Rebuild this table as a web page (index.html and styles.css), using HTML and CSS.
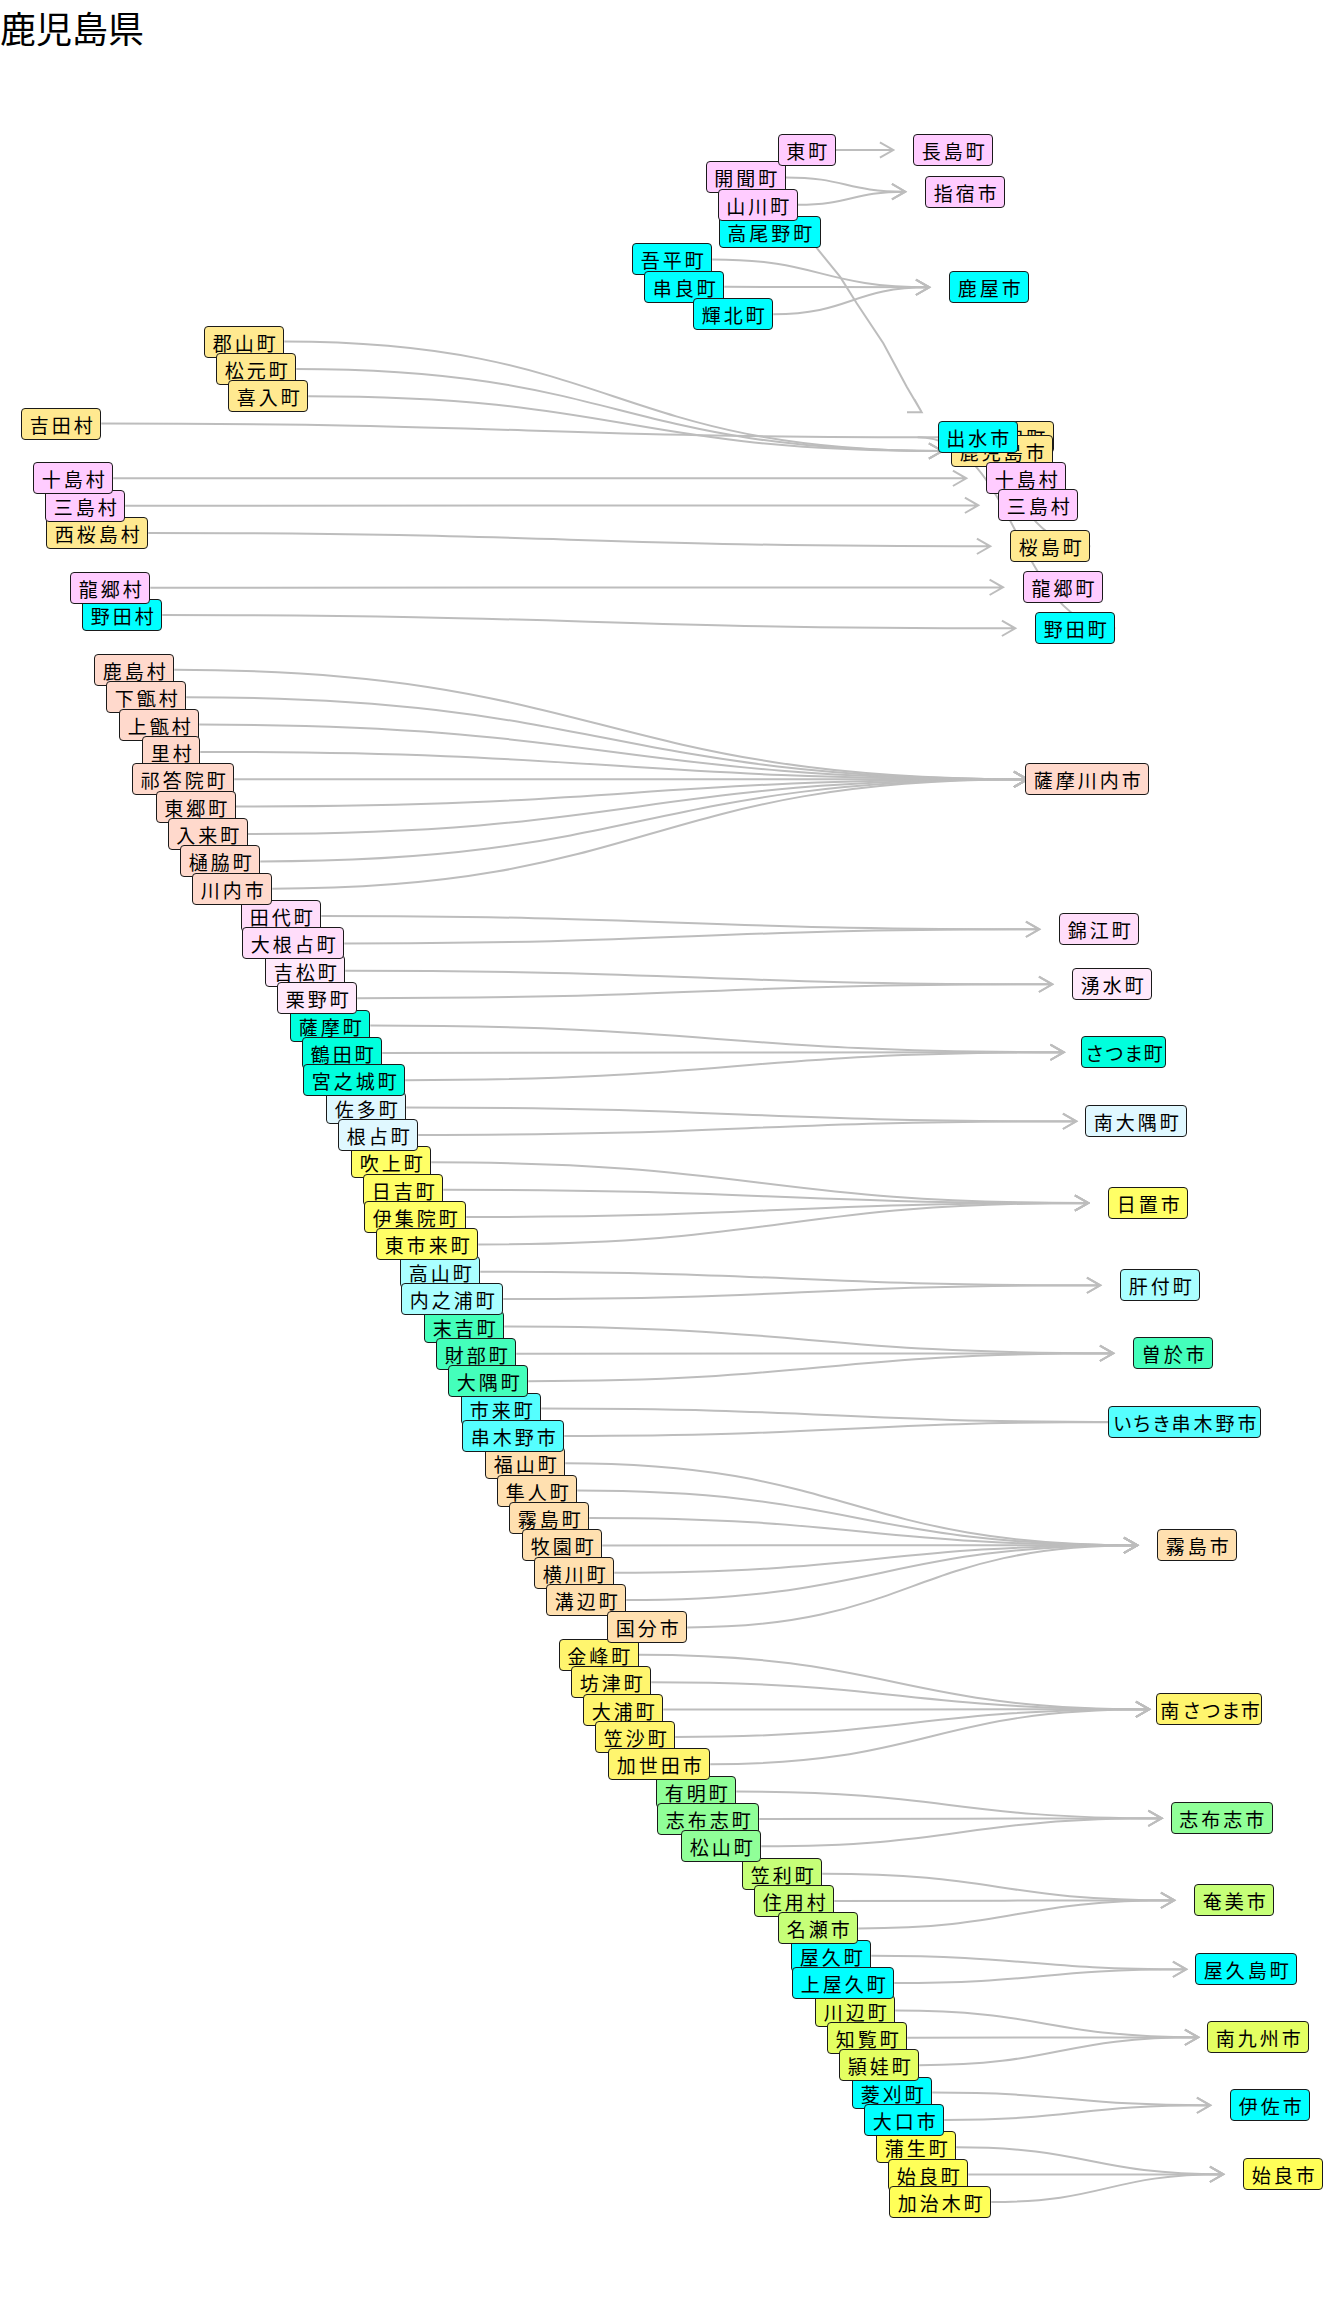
FILE: index.html
```html
<!DOCTYPE html>
<html lang="ja">
<head>
<meta charset="utf-8">
<title>鹿児島県</title>
<link rel="stylesheet" href="styles.css">
</head>
<body>
<h1 class="title">鹿児島県</h1>
<div class="diagram">
  <svg class="edges" width="1344" height="2254" viewBox="0 0 1344 2254" xmlns="http://www.w3.org/2000/svg">
    <path d="M806 182 L816.7 198 L840 226.7 L856.7 253.3 L883.3 293.3 L906.7 336.7 L921.7 362.3 M907 362.3 L921.7 362.3 L914.5 349.5"/>
  </svg>

  <!-- 始良市 -->
  <div class="n c-y2 w3" data-to="t-aira" style="left:876.3px;top:2081.3px">蒲生町</div>
  <div class="n c-y2 w3" data-to="t-aira" style="left:888.3px;top:2108.6px">始良町</div>
  <div class="n c-y2 w4" data-to="t-aira" style="left:889.3px;top:2136px">加治木町</div>
  <!-- 伊佐市 -->
  <div class="n c-cyan w3" data-to="t-isa" style="left:852.3px;top:2026.6px">菱刈町</div>
  <div class="n c-cyan w3" data-to="t-isa" style="left:864.3px;top:2053.9px">大口市</div>
  <!-- 南九州市 -->
  <div class="n c-lime2 w3" data-to="t-minamikyushu" style="left:815.3px;top:1944.5px">川辺町</div>
  <div class="n c-lime2 w3" data-to="t-minamikyushu" style="left:827.3px;top:1971.8px">知覧町</div>
  <div class="n c-lime2 w3" data-to="t-minamikyushu" style="left:839.3px;top:1999.2px">頴娃町</div>
  <!-- 屋久島町 -->
  <div class="n c-cyan w3" data-to="t-yakushima" style="left:791.3px;top:1889.8px">屋久町</div>
  <div class="n c-cyan w4" data-to="t-yakushima" style="left:792.3px;top:1917.1px">上屋久町</div>
  <!-- 奄美市 -->
  <div class="n c-lime w3" data-to="t-amami" style="left:742.3px;top:1807.7px">笠利町</div>
  <div class="n c-lime w3" data-to="t-amami" style="left:754.3px;top:1835px">住用村</div>
  <div class="n c-lime w3" data-to="t-amami" style="left:778.3px;top:1862.4px">名瀬市</div>
  <!-- 志布志市 -->
  <div class="n c-green w3" data-to="t-shibushi" style="left:656.3px;top:1725.6px">有明町</div>
  <div class="n c-green w4" data-to="t-shibushi" style="left:657.3px;top:1753px">志布志町</div>
  <div class="n c-green w3" data-to="t-shibushi" style="left:681.3px;top:1780.3px">松山町</div>
  <!-- 南さつま市 -->
  <div class="n c-lemon w3" data-to="t-minamisatsuma" style="left:558.7px;top:1588.8px">金峰町</div>
  <div class="n c-lemon w3" data-to="t-minamisatsuma" style="left:571.3px;top:1616.2px">坊津町</div>
  <div class="n c-lemon w3" data-to="t-minamisatsuma" style="left:583.3px;top:1643.5px">大浦町</div>
  <div class="n c-lemon w3" data-to="t-minamisatsuma" style="left:595.3px;top:1670.9px">笠沙町</div>
  <div class="n c-lemon w4" data-to="t-minamisatsuma" style="left:608.3px;top:1698.2px">加世田市</div>
  <!-- 霧島市 -->
  <div class="n c-bisque w3" data-to="t-kirishima" style="left:485.3px;top:1397.3px">福山町</div>
  <div class="n c-bisque w3" data-to="t-kirishima" style="left:497.3px;top:1424.6px">隼人町</div>
  <div class="n c-bisque w3" data-to="t-kirishima" style="left:509.3px;top:1452px">霧島町</div>
  <div class="n c-bisque w3" data-to="t-kirishima" style="left:522.3px;top:1479.4px">牧園町</div>
  <div class="n c-bisque w3" data-to="t-kirishima" style="left:534.3px;top:1506.7px">横川町</div>
  <div class="n c-bisque w3" data-to="t-kirishima" style="left:546.3px;top:1534.1px">溝辺町</div>
  <div class="n c-bisque w3" data-to="t-kirishima" style="left:607.3px;top:1561.4px">国分市</div>
  <!-- いちき串木野市 -->
  <div class="n c-cyan2 w3" data-to="t-ichiki" style="left:461.3px;top:1342.6px">市来町</div>
  <div class="n c-cyan2 w4" data-to="t-ichiki" style="left:462.3px;top:1369.9px">串木野市</div>
  <!-- 曽於市 -->
  <div class="n c-mint w3" data-to="t-soo" style="left:424.3px;top:1260.5px">末吉町</div>
  <div class="n c-mint w3" data-to="t-soo" style="left:436.3px;top:1287.8px">財部町</div>
  <div class="n c-mint w3" data-to="t-soo" style="left:448.3px;top:1315.2px">大隅町</div>
  <!-- 肝付町 -->
  <div class="n c-lcyan w3" data-to="t-kimotsuki" style="left:400.3px;top:1205.8px">高山町</div>
  <div class="n c-lcyan w4" data-to="t-kimotsuki" style="left:401.3px;top:1233.1px">内之浦町</div>
  <!-- 日置市 -->
  <div class="n c-yellow w3" data-to="t-hioki" style="left:351.3px;top:1096.3px">吹上町</div>
  <div class="n c-yellow w3" data-to="t-hioki" style="left:363.3px;top:1123.7px">日吉町</div>
  <div class="n c-yellow w4" data-to="t-hioki" style="left:364.3px;top:1151px">伊集院町</div>
  <div class="n c-yellow w4" data-to="t-hioki" style="left:376.3px;top:1178.4px">東市来町</div>
  <!-- 南大隅町 -->
  <div class="n c-ice w3" data-to="t-minamiosumi" style="left:326.3px;top:1041.6px">佐多町</div>
  <div class="n c-ice w3" data-to="t-minamiosumi" style="left:338.3px;top:1069px">根占町</div>
  <!-- さつま町 -->
  <div class="n c-aqua w3" data-to="t-satsuma" style="left:290.3px;top:959.5px">薩摩町</div>
  <div class="n c-aqua w3" data-to="t-satsuma" style="left:302.3px;top:986.9px">鶴田町</div>
  <div class="n c-aqua w4" data-to="t-satsuma" style="left:303.3px;top:1014.2px">宮之城町</div>
  <!-- 湧水町 -->
  <div class="n c-pink3 w3" data-to="t-yusui" style="left:265.3px;top:904.8px">吉松町</div>
  <div class="n c-pink3 w3" data-to="t-yusui" style="left:277.3px;top:932.2px">栗野町</div>
  <!-- 錦江町 -->
  <div class="n c-pink2 w3" data-to="t-kinko" style="left:241.3px;top:850.1px">田代町</div>
  <div class="n c-pink2 w4" data-to="t-kinko" style="left:242.3px;top:877.4px">大根占町</div>
  <!-- 薩摩川内市 -->
  <div class="n c-salmon w3" data-to="t-satsumasendai" style="left:94.3px;top:603.8px">鹿島村</div>
  <div class="n c-salmon w3" data-to="t-satsumasendai" style="left:106.3px;top:631.2px">下甑村</div>
  <div class="n c-salmon w3" data-to="t-satsumasendai" style="left:119.3px;top:658.6px">上甑村</div>
  <div class="n c-salmon w2" data-to="t-satsumasendai" style="left:142.3px;top:685.9px">里村</div>
  <div class="n c-salmon w4" data-to="t-satsumasendai" style="left:132.3px;top:713.3px">祁答院町</div>
  <div class="n c-salmon w3" data-to="t-satsumasendai" style="left:155.7px;top:740.6px">東郷町</div>
  <div class="n c-salmon w3" data-to="t-satsumasendai" style="left:167.7px;top:768px">入来町</div>
  <div class="n c-salmon w3" data-to="t-satsumasendai" style="left:180.3px;top:795.4px">樋脇町</div>
  <div class="n c-salmon w3" data-to="t-satsumasendai" style="left:192.3px;top:822.7px">川内市</div>
  <!-- single groups -->
  <div class="n c-cyan w3" data-to="t-noda" style="left:82.3px;top:549.1px">野田村</div>
  <div class="n c-pink w3" data-to="t-tatsugo" style="left:70.3px;top:521.8px">龍郷村</div>
  <div class="n c-khaki w4" data-to="t-sakurajima" style="left:46.3px;top:467px">西桜島村</div>
  <div class="n c-pink w3" data-to="t-mishima" style="left:45.3px;top:439.7px">三島村</div>
  <div class="n c-pink w3" data-to="t-toshima" style="left:33.3px;top:412.3px">十島村</div>
  <div class="n c-khaki w3" data-to="t-yoshida" style="left:21.3px;top:357.6px">吉田村</div>
  <!-- 鹿児島市 -->
  <div class="n c-khaki w3" data-to="t-kagoshima" style="left:204.3px;top:275.5px">郡山町</div>
  <div class="n c-khaki w3" data-to="t-kagoshima" style="left:216.3px;top:302.9px">松元町</div>
  <div class="n c-khaki w3" data-to="t-kagoshima" style="left:228.3px;top:330.2px">喜入町</div>
  <!-- 鹿屋市 -->
  <div class="n c-cyan w3" data-to="t-kanoya" style="left:632.3px;top:193.4px">吾平町</div>
  <div class="n c-cyan w3" data-to="t-kanoya" style="left:644.3px;top:220.8px">串良町</div>
  <div class="n c-cyan w3" data-to="t-kanoya" style="left:693.3px;top:248.2px">輝北町</div>
  <!-- 出水市 -->
  <div class="n c-cyan w4" style="left:718.7px;top:166.1px">高尾野町</div>
  <!-- 指宿市 -->
  <div class="n c-pink w3" data-to="t-ibusuki" style="left:705.7px;top:111.4px">開聞町</div>
  <div class="n c-pink w3" data-to="t-ibusuki" style="left:717.7px;top:138.7px">山川町</div>
  <!-- 長島町 -->
  <div class="n c-pink w2" data-to="t-nagashima" style="left:777.7px;top:84px">東町</div>

  <!-- targets -->
  <div class="n c-pink w3" id="t-nagashima" style="left:913.3px;top:84px">長島町</div>
  <div class="n c-pink w3" id="t-ibusuki" style="left:925.3px;top:125.7px">指宿市</div>
  <div class="n c-cyan w3" id="t-kanoya" style="left:949.3px;top:221.3px">鹿屋市</div>
  <div class="n c-khaki w3" id="t-yoshida" data-to="t-kagoshima" data-noarrow style="left:973.7px;top:371.3px">吉田町</div>
  <div class="n c-khaki w4" id="t-kagoshima" style="left:951.3px;top:385px">鹿児島市</div>
  <div class="n c-pink w3" id="t-toshima" style="left:986.3px;top:412.3px">十島村</div>
  <div class="n c-pink w3" id="t-mishima" style="left:998.3px;top:439.3px">三島村</div>
  <div class="n c-khaki w3" id="t-sakurajima" data-to="t-kagoshima" data-noarrow style="left:1010.3px;top:480.3px">桜島町</div>
  <div class="n c-pink w3" id="t-tatsugo" style="left:1023px;top:521.3px">龍郷町</div>
  <div class="n c-cyan w3" id="t-noda" data-to="t-izumi" data-noarrow style="left:1035.3px;top:562.3px">野田町</div>
  <div class="n c-cyan w3" id="t-izumi" style="left:937.7px;top:371.3px">出水市</div>
  <div class="n c-salmon w5" id="t-satsumasendai" style="left:1025.3px;top:713.3px">薩摩川内市</div>
  <div class="n c-pink2 w3" id="t-kinko" style="left:1059.3px;top:863.3px">錦江町</div>
  <div class="n c-pink3 w3" id="t-yusui" style="left:1072.3px;top:918.3px">湧水町</div>
  <div class="n c-aqua w-satsuma" id="t-satsuma" style="left:1081.3px;top:986.3px"><span class="kn">さつま</span>町</div>
  <div class="n c-ice w4" id="t-minamiosumi" style="left:1085.3px;top:1055.3px">南大隅町</div>
  <div class="n c-yellow w3" id="t-hioki" style="left:1108.3px;top:1137px">日置市</div>
  <div class="n c-lcyan w3" id="t-kimotsuki" style="left:1120.3px;top:1219.3px">肝付町</div>
  <div class="n c-mint w3" id="t-soo" style="left:1133.3px;top:1287.3px">曽於市</div>
  <div class="n c-cyan2 w-ichiki" id="t-ichiki" style="left:1108.3px;top:1356px"><span class="kn">いちき</span>串木野市</div>
  <div class="n c-bisque w3" id="t-kirishima" style="left:1157.3px;top:1479.3px">霧島市</div>
  <div class="n c-lemon w-minamisatsuma" id="t-minamisatsuma" style="left:1156.3px;top:1643.3px">南<span class="kn">さつま</span>市</div>
  <div class="n c-green w4" id="t-shibushi" style="left:1170.7px;top:1752.3px">志布志市</div>
  <div class="n c-lime w3" id="t-amami" style="left:1194.3px;top:1834.3px">奄美市</div>
  <div class="n c-cyan w4" id="t-yakushima" style="left:1195.3px;top:1903.3px">屋久島町</div>
  <div class="n c-lime2 w4" id="t-minamikyushu" style="left:1207.3px;top:1971.3px">南九州市</div>
  <div class="n c-cyan w3" id="t-isa" style="left:1230.3px;top:2039.3px">伊佐市</div>
  <div class="n c-y2 w3" id="t-aira" style="left:1243.3px;top:2108.3px">始良市</div>
</div>
<script src="script.js"></script>
</body>
</html>
```

FILE: styles.css
```css
html, body {
  margin: 0;
  padding: 0;
  background: #ffffff;
}

body {
  width: 1344px;
  font-family: "Noto Sans CJK JP", "Noto Sans CJK SC", sans-serif;
  color: #000000;
}

.title {
  margin: 0;
  height: 50px;
  box-sizing: border-box;
  padding-top: 9px;
  font-size: 36px;
  line-height: 36px;
  font-weight: 400;
  letter-spacing: 0;
}

.diagram {
  position: relative;
  width: 1344px;
  height: 2254px;
}

.edges {
  position: absolute;
  left: 0;
  top: 0;
  width: 1344px;
  height: 2254px;
}

.edges path {
  fill: none;
  stroke: #bdbdbd;
  stroke-width: 2;
}

.n {
  position: absolute;
  box-sizing: border-box;
  height: 32px;
  border: 1px solid #1a1a1a;
  border-radius: 4px;
  padding: 2px 0 0 3px;
  font-size: 19px;
  line-height: 28px;
  letter-spacing: 3px;
  text-align: center;
  white-space: nowrap;
}

.kn { letter-spacing: 0.5px; }

.w2 { width: 58px; }
.w3 { width: 80px; }
.w4 { width: 102px; }
.w5 { width: 124px; }
.w-satsuma { width: 85px; }
.w-minamisatsuma { width: 106px; }
.w-ichiki { width: 153px; }

.c-pink   { background: #ffccff; }
.c-cyan   { background: #00ffff; }
.c-khaki  { background: #ffe990; }
.c-salmon { background: #ffd9cc; }
.c-pink2  { background: #ffddfa; }
.c-pink3  { background: #ffe9fb; }
.c-aqua   { background: #00ffdd; }
.c-ice    { background: #e0f8ff; }
.c-yellow { background: #ffff66; }
.c-lcyan  { background: #aaffff; }
.c-mint   { background: #44ffbb; }
.c-cyan2  { background: #55ffff; }
.c-bisque { background: #ffe0b0; }
.c-lemon  { background: #fff56e; }
.c-green  { background: #90ff98; }
.c-lime   { background: #c6ff78; }
.c-lime2  { background: #e4ff62; }
.c-y2     { background: #ffff58; }
```

FILE: script.js
```js
(function () {
  var canvas = document.querySelector('.diagram');
  var svg = canvas.querySelector('svg.edges');
  var NS = 'http://www.w3.org/2000/svg';
  var origin = canvas.getBoundingClientRect();

  function box(el) {
    var r = el.getBoundingClientRect();
    return { x: r.left - origin.left, y: r.top - origin.top, w: r.width, h: r.height };
  }

  var nodes = canvas.querySelectorAll('.n[data-to]');
  for (var i = 0; i < nodes.length; i++) {
    var el = nodes[i];
    var t = document.getElementById(el.getAttribute('data-to'));
    if (!t) continue;
    var s = box(el), b = box(t);
    var sx = s.x + s.w, sy = s.y + s.h / 2;
    var tx = b.x + b.w / 2 - 60, ty = b.y + b.h / 2;
    var mx = (sx + tx) / 2;
    var d = 'M' + sx + ',' + sy + ' C' + mx + ',' + sy + ' ' + mx + ',' + ty + ' ' + tx + ',' + ty;
    if (!el.hasAttribute('data-noarrow')) {
      d += ' M' + (tx - 13.4) + ',' + (ty - 7.7) + ' L' + tx + ',' + ty + ' L' + (tx - 13.4) + ',' + (ty + 7.7);
    }
    var p = document.createElementNS(NS, 'path');
    p.setAttribute('d', d);
    svg.appendChild(p);
  }
})();
```
